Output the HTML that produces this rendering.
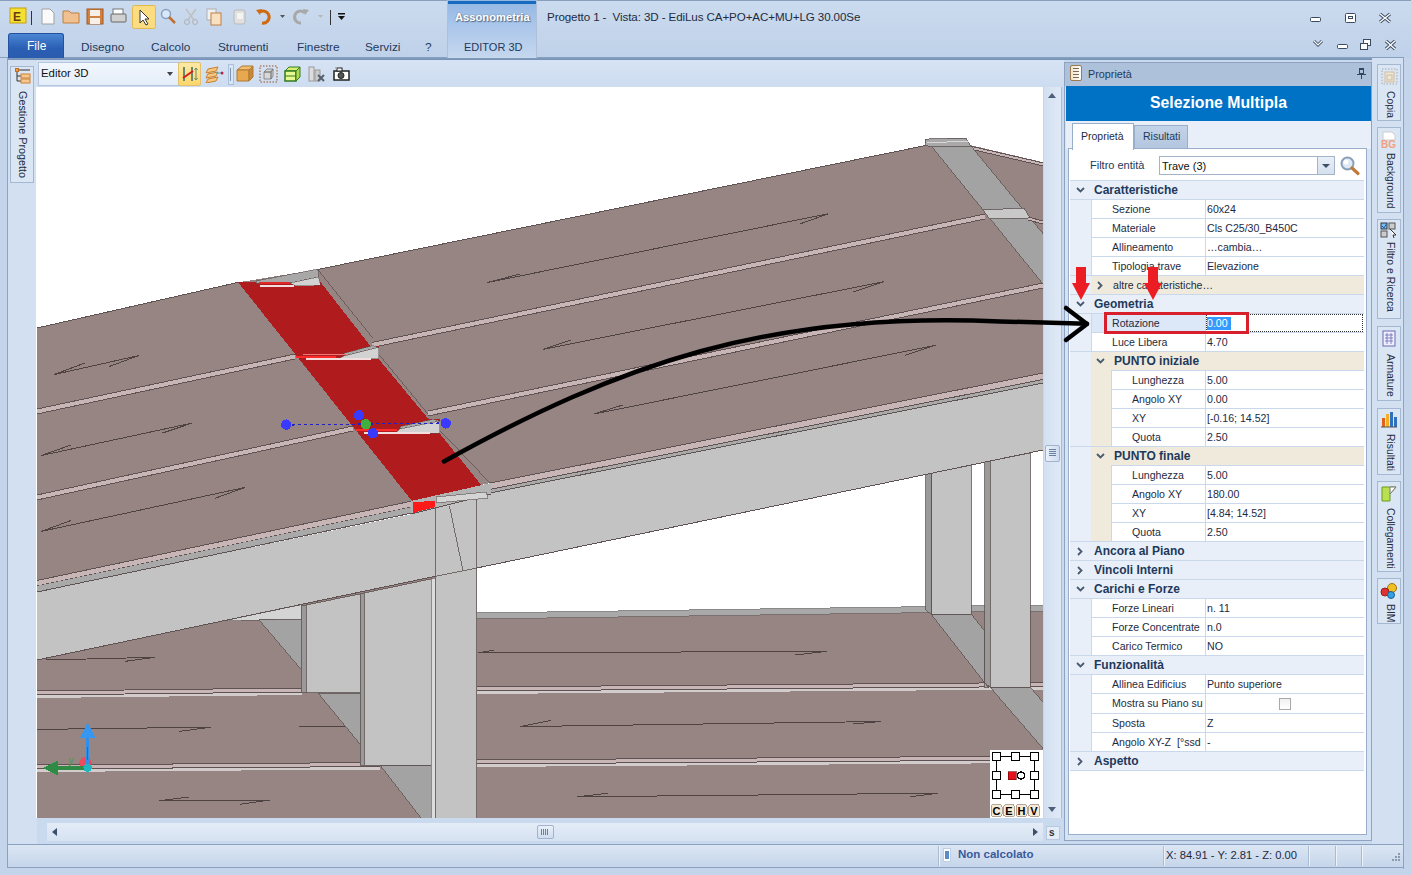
<!DOCTYPE html>
<html><head><meta charset="utf-8"><style>
*{margin:0;padding:0;box-sizing:border-box}
body{width:1411px;height:875px;overflow:hidden;position:relative;background:#c9d9ee;font-family:"Liberation Sans",sans-serif;font-size:11px;color:#1e2b3f}
.a{position:absolute}
.t{position:absolute;white-space:nowrap;line-height:1}
.vt{position:absolute;transform-origin:0 0;transform:rotate(90deg);white-space:nowrap;color:#1e2b3f;line-height:1}
#view{left:37px;top:87px;width:1006px;height:731px;background:#fff;overflow:hidden}
</style></head><body>
<div class="a" style="left:0;top:0;width:1411px;height:58px;background:linear-gradient(#cbdbef,#bfd1e9)"></div>
<div class="a" style="left:0;top:0;width:1411px;height:1px;background:#8a9fbb"></div>
<div class="a" style="left:0;top:57px;width:1404px;height:3px;background:linear-gradient(#8aa3c3,#7390b3)"></div>
<div class="a" style="left:447px;top:0;width:90px;height:58px;background:linear-gradient(#92b6e2,#a8c5ea 40%,#c6d7ee);border-left:1px solid #aec0d8;border-right:1px solid #aec0d8"></div>
<div class="a" style="left:448px;top:1px;width:88px;height:3px;background:#166ac0"></div>
<div class="t" style="left:455px;top:12px;font-size:11.2px;font-weight:bold;color:#fff;text-shadow:1px 1px 1px #5a6a80,0 0 2px #6a88b8">Assonometria</div>
<div class="t" style="left:464px;top:42px;font-size:11px;color:#1e395b">EDITOR 3D</div>
<div class="t" style="left:547px;top:11px;font-size:11.6px;color:#1e2b3f;letter-spacing:-0.1px">Progetto 1 -&nbsp; Vista: 3D - EdiLus CA+PO+AC+MU+LG 30.00Se</div>
<div class="a" style="left:8px;top:33px;width:56px;height:25px;background:linear-gradient(#4a86d4,#2b5fb4 60%,#2a5cae);border:1px solid #2450a0;border-bottom:none;border-radius:3px 3px 0 0"></div>
<div class="t" style="left:27px;top:40px;font-size:12px;color:#fff">File</div>
<div class="t" style="left:81px;top:42px;font-size:11.8px;color:#1e395b">Disegno</div>
<div class="t" style="left:151px;top:42px;font-size:11.8px;color:#1e395b">Calcolo</div>
<div class="t" style="left:218px;top:42px;font-size:11.8px;color:#1e395b">Strumenti</div>
<div class="t" style="left:297px;top:42px;font-size:11.8px;color:#1e395b">Finestre</div>
<div class="t" style="left:365px;top:42px;font-size:11.8px;color:#1e395b">Servizi</div>
<div class="t" style="left:425px;top:42px;font-size:11.8px;color:#1e395b">?</div>
<svg class="a" style="left:1300px;top:8px" width="100" height="48" viewBox="0 0 100 48"><rect x="10.5" y="9.5" width="10" height="4" rx="1" fill="#fff" stroke="#3a4a60" stroke-width="1"/><rect x="45.5" y="5.5" width="10" height="9" rx="1" fill="#fff" stroke="#3a4a60" stroke-width="1"/><rect x="48.5" y="8.5" width="4" height="2" fill="none" stroke="#3a4a60"/><path d="M80,6 L90,14 M90,6 L80,14" stroke="#3a4a60" stroke-width="3.2"/><path d="M80,6 L90,14 M90,6 L80,14" stroke="#fff" stroke-width="1.4"/><path d="M14,33 L18,37 L22,33" fill="none" stroke="#3a4a60" stroke-width="3"/><path d="M14,33 L18,37 L22,33" fill="none" stroke="#fff" stroke-width="1.2"/><rect x="37.5" y="36.5" width="10" height="4" rx="1" fill="#fff" stroke="#3a4a60"/><rect x="63.5" y="31.5" width="7" height="6" fill="#fff" stroke="#3a4a60"/><rect x="60.5" y="35.5" width="7" height="6" fill="#fff" stroke="#3a4a60"/><path d="M86,33 L95,41 M95,33 L86,41" stroke="#3a4a60" stroke-width="3.2"/><path d="M86,33 L95,41 M95,33 L86,41" stroke="#fff" stroke-width="1.4"/></svg>
<svg class="a" style="left:0;top:0" width="360" height="32" viewBox="0 0 360 32"><rect x="10" y="8" width="16" height="15" fill="#f5e030" stroke="#c8a010"/><text x="13" y="21" font-size="12" font-weight="bold" fill="#6a3a10" font-family="Liberation Sans">E</text><line x1="31.5" y1="11" x2="31.5" y2="25" stroke="#333"/><path d="M42,9 H50 L54,13 V24 H42Z" fill="#fafafa" stroke="#a0a0a0"/><path d="M63,11 H69 L71,13 H79 V23 H63Z" fill="#f0c090" stroke="#c08040"/><rect x="87" y="9" width="16" height="15" fill="#d08040" stroke="#a05820"/><rect x="90" y="10" width="10" height="6" fill="#f8f0e8"/><rect x="90" y="18" width="10" height="6" fill="#f8f0e8"/><rect x="113" y="9" width="10" height="6" fill="#fff" stroke="#777"/><rect x="111" y="14" width="15" height="8" rx="1" fill="#d0d0d0" stroke="#666"/><rect x="132.5" y="5.5" width="23" height="23" rx="2" fill="#fcdc80" stroke="#e0b850"/><path d="M140,10 L140,23 L143,20 L146,25 L148,24 L145,19 L149,19Z" fill="#fff" stroke="#333" stroke-width="1"/><circle cx="166" cy="14" r="4.5" fill="#d8e8f8" stroke="#8aa0c0" stroke-width="1.5"/><line x1="169" y1="17" x2="175" y2="23" stroke="#c07030" stroke-width="2.5"/><path d="M186,9 L194,20 M196,9 L188,20" stroke="#c0c0c0" stroke-width="1.5"/><circle cx="187" cy="22" r="2.5" fill="none" stroke="#b0b0b0"/><circle cx="195" cy="22" r="2.5" fill="none" stroke="#b0b0b0"/><rect x="207" y="9" width="9" height="11" fill="#f0f0f0" stroke="#b0b0b0"/><rect x="211" y="13" width="10" height="12" fill="#f8e0c0" stroke="#c08040"/><rect x="234" y="10" width="11" height="14" rx="2" fill="#e0e0e0" stroke="#b8b8b8"/><rect x="237" y="13" width="6" height="6" fill="#f4f4f4"/><path d="M260,12 A6,6 0 1 1 262,23" fill="none" stroke="#d06a10" stroke-width="3"/><path d="M256,10 L262,9 L260,15Z" fill="#d06a10"/><path d="M280,15 L285,15 L282.5,18Z" fill="#555"/><path d="M305,13 A6,6 0 1 0 301,23" fill="none" stroke="#a8a8a8" stroke-width="3"/><path d="M309,10 L303,9 L305,15Z" fill="#a8a8a8"/><path d="M318,15 L323,15 L320.5,18Z" fill="#b8b8b8"/><line x1="330.5" y1="10" x2="330.5" y2="25" stroke="#333"/><rect x="338" y="13" width="7" height="1.5" fill="#111"/><path d="M338,16 L345,16 L341.5,20Z" fill="#111"/></svg>
<div class="a" style="left:0;top:58px;width:7px;height:817px;background:#c4d4ea"></div>
<div class="a" style="left:7px;top:58px;width:1px;height:811px;background:#8ea3bf"></div>
<div class="a" style="left:8px;top:60px;width:29px;height:784px;background:#d3e0f1"></div>
<div class="a" style="left:10px;top:66px;width:24px;height:117px;background:#dbe6f4;border:1px solid #a4b8d2"></div>
<svg class="a" style="left:14px;top:67px" width="17" height="17" viewBox="0 0 17 17"><rect x="1.5" y="1.5" width="3" height="3" fill="#f0a040" stroke="#c07020" stroke-width="1"/><path d="M3,5 V14 H7 M3,9 H7 M5,3 H16" fill="none" stroke="#333" stroke-width="1"/><rect x="7" y="7" width="9" height="4" fill="#f6c890" stroke="#d08030" stroke-width="1"/><rect x="7" y="12" width="9" height="4" fill="#f6c890" stroke="#d08030" stroke-width="1"/></svg>
<div class="vt" style="left:28px;top:91px;font-size:10.8px">Gestione Progetto</div>
<div class="a" style="left:37px;top:60px;width:1027px;height:27px;background:linear-gradient(#d6e3f4,#cddcf0)"></div>
<div class="a" style="left:38px;top:62px;width:141px;height:24px;background:linear-gradient(#f2f7fd,#e4edf8);border:1px solid #b3c6de"></div>
<div class="t" style="left:41px;top:68px;font-size:11.4px;color:#111">Editor 3D</div>
<div class="a" style="left:167px;top:72px;width:0;height:0;border-left:3.5px solid transparent;border-right:3.5px solid transparent;border-top:4px solid #444"></div>
<div class="a" style="left:178px;top:62px;width:23px;height:24px;background:linear-gradient(#fde9a5,#fcd66c);border:1px solid #e3c06a;border-radius:2px"></div>
<svg class="a" style="left:181px;top:66px" width="18" height="16" viewBox="0 0 18 16"><rect x="2" y="1" width="2" height="14" fill="#6a8a70"/><rect x="10" y="1" width="2" height="14" fill="#6a8a70"/><line x1="2" y1="12" x2="12" y2="5" stroke="#d02020" stroke-width="2"/><path d="M15,2 V14 M13.5,4 L15,2 L16.5,4 M13.5,12 L15,14 L16.5,12" stroke="#6a8a70" fill="none" stroke-width="1"/></svg>
<svg class="a" style="left:205px;top:65px" width="20" height="18" viewBox="0 0 20 18"><path d="M3,4 L13,2 L11,6 L1,8Z M3,9 L13,7 L11,11 L1,13Z M3,14 L13,12 L11,16 L1,18Z" fill="#f8c880" stroke="#c8802a" stroke-width="1"/><circle cx="17" cy="8" r="1.5" fill="#c02040"/><line x1="11" y1="8" x2="16" y2="8" stroke="#50a0b0"/></svg>
<div class="a" style="left:228px;top:64px;width:6px;height:21px;border:1px solid #aac0da;background:#d8e5f5"></div><div class="a" style="left:230px;top:68px;width:1px;height:13px;background:#7f95b5"></div>
<svg class="a" style="left:236px;top:65px" width="18" height="17" viewBox="0 0 18 17"><path d="M1,5 L6,1 H17 L13,5Z" fill="#f0c070" stroke="#b07a30"/><path d="M1,5 H13 V16 H1Z" fill="#e8a850" stroke="#b07a30"/><path d="M13,5 L17,1 V12 L13,16Z" fill="#c88838" stroke="#b07a30"/></svg>
<svg class="a" style="left:259px;top:65px" width="19" height="18" viewBox="0 0 19 18"><rect x="1" y="1" width="17" height="16" fill="none" stroke="#a05020" stroke-dasharray="1.5,1.5"/><path d="M5,7 L8,4 H14 L12,7Z M5,7 H12 V14 H5Z M12,7 L14,4 V11 L12,14Z" fill="#d8d8d8" stroke="#777" stroke-width="0.8"/></svg>
<svg class="a" style="left:283px;top:64px" width="19" height="19" viewBox="0 0 19 19"><path d="M2,7 L6,3 H17 L13,7Z" fill="#d8f070" stroke="#307a20"/><path d="M2,7 H13 V17 H2Z" fill="#e8f890" stroke="#307a20" stroke-width="1.5"/><path d="M13,7 L17,3 V13 L13,17Z" fill="#b0d850" stroke="#307a20"/><line x1="2" y1="12" x2="13" y2="12" stroke="#307a20"/></svg>
<svg class="a" style="left:307px;top:64px" width="19" height="19" viewBox="0 0 19 19"><rect x="2" y="3" width="5" height="14" fill="#ddd" stroke="#999"/><rect x="8" y="6" width="5" height="11" fill="#ccc" stroke="#999"/><path d="M11,11 L17,17 M17,11 L11,17" stroke="#556070" stroke-width="2"/></svg>
<svg class="a" style="left:332px;top:65px" width="19" height="17" viewBox="0 0 19 17"><rect x="2" y="6" width="15" height="9" fill="#fff" stroke="#222" stroke-width="1.5"/><circle cx="9" cy="10.5" r="3" fill="#555" stroke="#222"/><rect x="5" y="3" width="5" height="3" fill="#fff" stroke="#222"/><circle cx="4" cy="3" r="1" fill="#aaa"/></svg>
<div class="a" style="left:36px;top:87px;width:1px;height:731px;background:#fff"></div>
<div class="a" style="left:1043px;top:87px;width:19px;height:731px;background:linear-gradient(90deg,#d3e0f1,#e0e9f6);border-left:1px solid #c8d6ea;border-right:1px solid #a9bcd6"></div>
<div class="a" style="left:1048px;top:93px;width:0;height:0;border-left:4.5px solid transparent;border-right:4.5px solid transparent;border-bottom:5px solid #4e5f7a"></div>
<div class="a" style="left:1048px;top:807px;width:0;height:0;border-left:4.5px solid transparent;border-right:4.5px solid transparent;border-top:5px solid #4e5f7a"></div>
<div class="a" style="left:1045px;top:445px;width:15px;height:17px;background:linear-gradient(90deg,#e9f0fa,#cfdcef);border:1px solid #9fb3cf;border-radius:2px"></div>
<div class="a" style="left:1049px;top:449px;width:7px;height:1px;background:#6a7f9f"></div>
<div class="a" style="left:1049px;top:451px;width:7px;height:1px;background:#6a7f9f"></div>
<div class="a" style="left:1049px;top:453px;width:7px;height:1px;background:#6a7f9f"></div>
<div class="a" style="left:1049px;top:455px;width:7px;height:1px;background:#6a7f9f"></div>
<div class="a" style="left:37px;top:818px;width:1026px;height:26px;background:#c9d9ee"></div>
<div class="a" style="left:47px;top:823px;width:996px;height:18px;background:linear-gradient(#e3ecf7,#d6e2f2)"></div>
<div class="a" style="left:52px;top:828px;width:0;height:0;border-top:4.5px solid transparent;border-bottom:4.5px solid transparent;border-right:5px solid #3e4f6a"></div>
<div class="a" style="left:1033px;top:828px;width:0;height:0;border-top:4.5px solid transparent;border-bottom:4.5px solid transparent;border-left:5px solid #3e4f6a"></div>
<div class="a" style="left:537px;top:825px;width:17px;height:14px;background:linear-gradient(#e9f0fa,#cfdcef);border:1px solid #9fb3cf;border-radius:2px"></div>
<div class="a" style="left:541px;top:829px;width:1px;height:6px;background:#6a7f9f"></div>
<div class="a" style="left:543px;top:829px;width:1px;height:6px;background:#6a7f9f"></div>
<div class="a" style="left:545px;top:829px;width:1px;height:6px;background:#6a7f9f"></div>
<div class="a" style="left:547px;top:829px;width:1px;height:6px;background:#6a7f9f"></div>
<div class="a" style="left:1046px;top:826px;width:14px;height:14px;background:#e4ecf7;border:1px solid #b8c8de"></div>
<div class="t" style="left:1049px;top:828px;font-size:10px;color:#333;font-weight:bold">s</div>
<div class="a" style="left:7px;top:844px;width:1397px;height:24px;background:linear-gradient(#dbe6f4,#c6d5ea);border-top:1px solid #8aa1c0;border-bottom:1px solid #8aa1c0;border-left:1px solid #8aa1c0"></div>
<div class="a" style="left:938px;top:846px;width:1px;height:20px;background:#a9bbd3"></div><div class="a" style="left:939px;top:846px;width:1px;height:20px;background:#eef3fa"></div>
<div class="a" style="left:1163px;top:846px;width:1px;height:20px;background:#a9bbd3"></div><div class="a" style="left:1164px;top:846px;width:1px;height:20px;background:#eef3fa"></div>
<div class="a" style="left:1308px;top:846px;width:1px;height:20px;background:#a9bbd3"></div><div class="a" style="left:1309px;top:846px;width:1px;height:20px;background:#eef3fa"></div>
<div class="a" style="left:1335px;top:846px;width:1px;height:20px;background:#a9bbd3"></div><div class="a" style="left:1336px;top:846px;width:1px;height:20px;background:#eef3fa"></div>
<div class="a" style="left:1361px;top:846px;width:1px;height:20px;background:#a9bbd3"></div><div class="a" style="left:1362px;top:846px;width:1px;height:20px;background:#eef3fa"></div>
<div class="a" style="left:943px;top:848px;width:8px;height:14px;background:#fff;border:1px solid #c0d0e4"></div><div class="a" style="left:945px;top:851px;width:4px;height:8px;background:#5a8ac8"></div>
<div class="t" style="left:958px;top:849px;font-size:11.5px;font-weight:bold;color:#3a5a9a">Non calcolato</div>
<div class="t" style="left:1166px;top:850px;font-size:11.2px;color:#1e2b3f">X: 84.91 - Y: 2.81 - Z: 0.00</div>
<div class="a" style="left:1398px;top:853px;width:2px;height:2px;background:#8a9ab0"></div>
<div class="a" style="left:1395px;top:856px;width:2px;height:2px;background:#8a9ab0"></div>
<div class="a" style="left:1398px;top:856px;width:2px;height:2px;background:#8a9ab0"></div>
<div class="a" style="left:1392px;top:859px;width:2px;height:2px;background:#8a9ab0"></div>
<div class="a" style="left:1395px;top:859px;width:2px;height:2px;background:#8a9ab0"></div>
<div class="a" style="left:1398px;top:859px;width:2px;height:2px;background:#8a9ab0"></div>
<div class="a" style="left:0;top:868px;width:1411px;height:7px;background:#c4d4ea"></div>
<div class="a" style="left:1372px;top:58px;width:31px;height:786px;background:#d3e0f1"></div>
<div class="a" style="left:1403px;top:58px;width:1px;height:811px;background:#8ea3bf"></div>
<div class="a" style="left:1404px;top:58px;width:7px;height:817px;background:#c4d4ea"></div>
<div class="a" style="left:1377px;top:64px;width:24px;height:57px;background:#dbe6f4;border:1px solid #a4b8d2"></div>
<div class="vt" style="left:1395px;top:91px;font-size:10.4px">Copia</div>
<div class="a" style="left:1377px;top:127px;width:24px;height:86px;background:#dbe6f4;border:1px solid #a4b8d2"></div>
<div class="vt" style="left:1395px;top:153px;font-size:10.4px">Background</div>
<div class="a" style="left:1377px;top:219px;width:24px;height:100px;background:#dbe6f4;border:1px solid #a4b8d2"></div>
<div class="vt" style="left:1395px;top:242px;font-size:10.4px">Filtro e Ricerca</div>
<div class="a" style="left:1377px;top:326px;width:24px;height:75px;background:#dbe6f4;border:1px solid #a4b8d2"></div>
<div class="vt" style="left:1395px;top:354px;font-size:10.4px">Armature</div>
<div class="a" style="left:1377px;top:408px;width:24px;height:67px;background:#dbe6f4;border:1px solid #a4b8d2"></div>
<div class="vt" style="left:1395px;top:434px;font-size:10.4px">Risultati</div>
<div class="a" style="left:1377px;top:481px;width:24px;height:91px;background:#dbe6f4;border:1px solid #a4b8d2"></div>
<div class="vt" style="left:1395px;top:508px;font-size:10.4px">Collegamenti</div>
<div class="a" style="left:1377px;top:578px;width:24px;height:46px;background:#dbe6f4;border:1px solid #a4b8d2"></div>
<div class="vt" style="left:1395px;top:604px;font-size:10.4px">BIM</div>
<svg class="a" style="left:1381px;top:68px" width="17" height="17" viewBox="0 0 17 17"><rect x="1" y="1" width="15" height="15" fill="none" stroke="#aaa" stroke-dasharray="1.5,1.5"/><rect x="4" y="4" width="9" height="10" fill="#efe6d6" stroke="#cdbda0"/><rect x="6" y="7" width="5" height="5" fill="none" stroke="#cdbda0"/></svg>
<svg class="a" style="left:1380px;top:131px" width="19" height="18" viewBox="0 0 19 18"><path d="M3,1 H12 L15,4 V9 H3Z" fill="#fff" stroke="#ccc"/><text x="1" y="17" font-size="10" font-weight="bold" fill="#f0a080" font-family="Liberation Sans">BG</text></svg>
<svg class="a" style="left:1380px;top:222px" width="18" height="17" viewBox="0 0 18 17"><rect x="1" y="1" width="6" height="6" fill="#7ac0f0" stroke="#333"/><path d="M2,4 L4,6 L7,1" stroke="#1a5ab0" fill="none"/><rect x="1" y="9" width="6" height="6" fill="#ccc" stroke="#555"/><rect x="9" y="1" width="6" height="6" fill="#ccc" stroke="#555"/><path d="M10,7 L16,13 L13,13 L14,16" fill="#fff" stroke="#333"/></svg>
<svg class="a" style="left:1381px;top:330px" width="16" height="17" viewBox="0 0 16 17"><rect x="2" y="1" width="12" height="15" fill="#eef" stroke="#6a6ab0"/><path d="M4,5 H12 M4,8 H12 M4,11 H12 M6,3 V14 M10,3 V14" stroke="#6a6ab0" stroke-width="0.8"/></svg>
<svg class="a" style="left:1380px;top:410px" width="18" height="18" viewBox="0 0 18 18"><rect x="2" y="8" width="3" height="9" fill="#e06020"/><rect x="6" y="4" width="3" height="13" fill="#f0b020"/><rect x="10" y="2" width="3" height="15" fill="#3070c0"/><rect x="14" y="7" width="3" height="10" fill="#3070c0"/><line x1="1" y1="17" x2="17" y2="17" stroke="#555"/></svg>
<svg class="a" style="left:1380px;top:485px" width="18" height="18" viewBox="0 0 18 18"><path d="M2,2 H16 L10,9 V16 H2Z" fill="#b8e050" stroke="#6a9a20"/><path d="M10,2 H16 L10,9Z" fill="#fff" stroke="#777"/></svg>
<svg class="a" style="left:1380px;top:582px" width="18" height="17" viewBox="0 0 18 17"><circle cx="12" cy="6" r="4.5" fill="#f0c020" stroke="#a07010"/><circle cx="5" cy="10" r="4" fill="#e03030" stroke="#902020"/><circle cx="11" cy="13" r="3.5" fill="#30a0e0" stroke="#206090"/></svg>
<div id="view" class="a"><svg class="a" style="left:0;top:0" width="1006" height="731" viewBox="37 87 1006 731" shape-rendering="crispEdges"><polygon points="37,600 1043,440 1043,818 37,818" fill="#978584"/><polygon points="476.5,566 1043,448 1043,608 476.5,617.5" fill="#ffffff"/><polygon points="476.5,613 1043,605 1043,611 476.5,619" fill="#a9a9a9"/><line x1="476.5" y1="619" x2="1043" y2="611" stroke="#7a7070" stroke-width="1"/><line x1="476.5" y1="613" x2="1043" y2="605" stroke="#8a8a8a" stroke-width="1"/><polygon points="37,691 302,688 302,692 37,695" fill="#c8b6b6"/><polygon points="37,695 302,692 302,695 37,698" fill="#d2cccc"/><line x1="37" y1="691" x2="302" y2="688" stroke="#5e5252" stroke-width="1"/><line x1="37" y1="695" x2="302" y2="692" stroke="#5e5252" stroke-width="1"/><polygon points="476,687 1043,682.5 1043,686.5 476,691" fill="#c8b6b6"/><polygon points="476,691 1043,686.5 1043,689.5 476,694" fill="#d2cccc"/><line x1="476" y1="687" x2="1043" y2="682.5" stroke="#5e5252" stroke-width="1"/><line x1="476" y1="691" x2="1043" y2="686.5" stroke="#5e5252" stroke-width="1"/><polygon points="37,765 380,762.5 380,766.5 37,769" fill="#c8b6b6"/><polygon points="37,769 380,766.5 380,769.5 37,772" fill="#d2cccc"/><line x1="37" y1="765" x2="380" y2="762.5" stroke="#5e5252" stroke-width="1"/><line x1="37" y1="769" x2="380" y2="766.5" stroke="#5e5252" stroke-width="1"/><polygon points="476,760 1043,756 1043,760 476,764" fill="#c8b6b6"/><polygon points="476,764 1043,760 1043,763 476,767" fill="#d2cccc"/><line x1="476" y1="760" x2="1043" y2="756" stroke="#5e5252" stroke-width="1"/><line x1="476" y1="764" x2="1043" y2="760" stroke="#5e5252" stroke-width="1"/><line x1="46.5" y1="660" x2="154.8" y2="657.3" stroke="#4e4242" stroke-width="1"/><line x1="154.8" y1="657.3" x2="124.6" y2="661.4" stroke="#4e4242" stroke-width="1"/><line x1="37" y1="729.4" x2="211" y2="727.2" stroke="#4e4242" stroke-width="1"/><line x1="211" y1="727.2" x2="179.4" y2="731.4" stroke="#4e4242" stroke-width="1"/><line x1="158.9" y1="800.7" x2="270" y2="800" stroke="#4e4242" stroke-width="1"/><line x1="158.9" y1="800.7" x2="189" y2="797" stroke="#4e4242" stroke-width="1"/><line x1="270" y1="800" x2="239.8" y2="804.3" stroke="#4e4242" stroke-width="1"/><line x1="478" y1="653" x2="826.7" y2="651.3" stroke="#4e4242" stroke-width="1"/><line x1="478" y1="653" x2="494" y2="650" stroke="#4e4242" stroke-width="1"/><line x1="826.7" y1="651.3" x2="795.5" y2="655" stroke="#4e4242" stroke-width="1"/><line x1="520" y1="726.6" x2="881.2" y2="721.5" stroke="#4e4242" stroke-width="1"/><line x1="520" y1="726.6" x2="551" y2="720.4" stroke="#4e4242" stroke-width="1"/><line x1="881.2" y1="721.5" x2="852.6" y2="724" stroke="#4e4242" stroke-width="1"/><line x1="577.2" y1="796.8" x2="938.4" y2="793.2" stroke="#4e4242" stroke-width="1"/><line x1="577.2" y1="796.8" x2="608.4" y2="793.2" stroke="#4e4242" stroke-width="1"/><line x1="938.4" y1="793.2" x2="909.8" y2="796.8" stroke="#4e4242" stroke-width="1"/><line x1="299" y1="727" x2="346" y2="726" stroke="#4e4242" stroke-width="1"/><polygon points="223,621 302,604.5 302,619.5 259,620" fill="#d4d4d4" stroke="#5e5252" stroke-width="0.6"/><polygon points="259,619.8 302,619 302,670.5" fill="#a3a3a3" stroke="#5e5252" stroke-width="0.8"/><polygon points="318,693 360,693 360,744" fill="#a3a3a3" stroke="#5e5252" stroke-width="0.8"/><polygon points="380,765 435,765 435,818 421,818" fill="#a3a3a3" stroke="#5e5252" stroke-width="0.8"/><polygon points="931,614 971,614 984,630 984,687 988.6,687.7" fill="#a3a3a3" stroke="#5e5252" stroke-width="0.8"/><polygon points="990,687 1030,687 1043,702 1043,748.5" fill="#a3a3a3" stroke="#5e5252" stroke-width="0.8"/><polygon points="925.6,474 931.5,473 931.5,614.3 925.6,610" fill="#9a9a9a" stroke="#5e5252" stroke-width="0.8"/><polygon points="931.5,473 971.2,465 971.2,614.3 931.5,614.3" fill="#c3c3c3" stroke="#5e5252" stroke-width="0.8"/><polygon points="984.6,462 990.3,461 990.3,687 984.6,683" fill="#9a9a9a" stroke="#5e5252" stroke-width="0.8"/><polygon points="990.3,461 1030.2,453 1030.2,687 990.3,687" fill="#c3c3c3" stroke="#5e5252" stroke-width="0.8"/><polygon points="301,606 306,605 306,692.8 301,692.8" fill="#9a9a9a" stroke="#5e5252" stroke-width="0.8"/><polygon points="306,605 360,594 360,692.8 306,692.8" fill="#c3c3c3" stroke="#5e5252" stroke-width="0.8"/><polygon points="360,594 364,593 364,765.4 360,765.4" fill="#9a9a9a" stroke="#5e5252" stroke-width="0.8"/><polygon points="364,593 431,579 431,765.4 364,765.4" fill="#c3c3c3" stroke="#5e5252" stroke-width="0.8"/><polygon points="431,579 435,578 435,818 431,818" fill="#dcdcdc" stroke="#5e5252" stroke-width="0.6"/><polygon points="37,592 412,514 490,493 1043,383 1043,450 476.8,568 435,576.3 37,660" fill="#c3c3c3"/><line x1="37" y1="660" x2="435" y2="576.3" stroke="#5e5252" stroke-width="1"/><line x1="476.8" y1="568" x2="1043" y2="450" stroke="#5e5252" stroke-width="1"/><polygon points="435.1,503 476.5,498 476.5,818 435.1,818" fill="#c3c3c3" stroke="#5e5252" stroke-width="0.8"/><line x1="449.4" y1="505.8" x2="463" y2="570.8" stroke="#5e5252" stroke-width="0.8"/><line x1="435.1" y1="576.3" x2="476.5" y2="568" stroke="#5e5252" stroke-width="0.8"/><polygon points="37,328 238,282.4 318,269.4 925.7,145 970,145 1043.5,162.3 1043,373 490,483 412,501 37,580.5" fill="#978584"/><line x1="37" y1="328" x2="238" y2="282.4" stroke="#5e5252" stroke-width="1"/><line x1="318" y1="269.4" x2="925.7" y2="145.5" stroke="#5e5252" stroke-width="1"/><polygon points="970,146 1043.5,163 1043.5,166 970,149" fill="#c8b6b6"/><line x1="970" y1="146" x2="1043.5" y2="163" stroke="#5e5252" stroke-width="1"/><line x1="970" y1="149" x2="1043.5" y2="166" stroke="#5e5252" stroke-width="1"/><polygon points="931.5,146.3 970.3,145.2 1043.5,234.3 1043.5,284.6" fill="#a3a3a3" stroke="#5e5252" stroke-width="0.8"/><polygon points="925.1,139.1 965.7,138 970.9,146 932,147 925.7,145.4" fill="#a9a9a9" stroke="#5e5252" stroke-width="0.8"/><line x1="927" y1="142.5" x2="968" y2="141.5" stroke="#d8d8d8" stroke-width="1"/><polygon points="983,210 1024,208 1030,218 989.8,219" fill="#c8c8c8" stroke="#5e5252" stroke-width="0.8"/><polygon points="37,409 295,354 295,359 37,414" fill="#c8b6b6"/><line x1="37" y1="409" x2="295" y2="354" stroke="#5e5252" stroke-width="1"/><line x1="37" y1="414" x2="295" y2="359" stroke="#5e5252" stroke-width="1"/><polygon points="37,495 353,426 353,431 37,500" fill="#c8b6b6"/><line x1="37" y1="495" x2="353" y2="426" stroke="#5e5252" stroke-width="1"/><line x1="37" y1="500" x2="353" y2="431" stroke="#5e5252" stroke-width="1"/><polygon points="372,342.5 985,214 985,219 372,347.5" fill="#c8b6b6"/><line x1="372" y1="342.5" x2="985" y2="214" stroke="#5e5252" stroke-width="1"/><line x1="372" y1="347.5" x2="985" y2="219" stroke="#5e5252" stroke-width="1"/><polygon points="428,411 1043,283 1043,288 428,416" fill="#c8b6b6"/><line x1="428" y1="411" x2="1043" y2="283" stroke="#5e5252" stroke-width="1"/><line x1="428" y1="416" x2="1043" y2="288" stroke="#5e5252" stroke-width="1"/><polygon points="1028,217 1043,221 1043,224 1028,220" fill="#c8b6b6"/><line x1="1028" y1="217" x2="1043" y2="221" stroke="#5e5252" stroke-width="1"/><line x1="1028" y1="220" x2="1043" y2="224" stroke="#5e5252" stroke-width="1"/><polygon points="37,580.5 412,501 412,512 37,592" fill="#c8b6b6"/><line x1="37" y1="580.5" x2="412" y2="501" stroke="#5e5252" stroke-width="1"/><line x1="37" y1="586" x2="412" y2="507" stroke="#5e5252" stroke-width="1"/><line x1="37" y1="592" x2="412" y2="513" stroke="#5e5252" stroke-width="1"/><polygon points="37,586 412,507 412,513 37,592" fill="#a9a9a9"/><line x1="37" y1="592" x2="412" y2="513" stroke="#5e5252" stroke-width="1"/><polygon points="490,483 1043,373 1043,383 490,493" fill="#c8b6b6"/><polygon points="490,489.4 1043,379.4 1043,383 490,493" fill="#a9a9a9"/><line x1="490" y1="483" x2="1043" y2="373" stroke="#5e5252" stroke-width="1"/><line x1="490" y1="489.4" x2="1043" y2="379.4" stroke="#5e5252" stroke-width="1"/><line x1="490" y1="493" x2="1043" y2="383" stroke="#5e5252" stroke-width="1"/><line x1="54" y1="374.6" x2="138.6" y2="355.6" stroke="#4e4242" stroke-width="1"/><line x1="54" y1="374.6" x2="84.9" y2="363" stroke="#4e4242" stroke-width="1"/><line x1="138.6" y1="355.6" x2="108.9" y2="366.6" stroke="#4e4242" stroke-width="1"/><line x1="41.4" y1="455.5" x2="192.4" y2="423" stroke="#4e4242" stroke-width="1"/><line x1="41.4" y1="455.5" x2="71" y2="445" stroke="#4e4242" stroke-width="1"/><line x1="192.4" y1="423" x2="162.6" y2="433" stroke="#4e4242" stroke-width="1"/><line x1="41.4" y1="531.4" x2="244.8" y2="487.5" stroke="#4e4242" stroke-width="1"/><line x1="41.4" y1="531.4" x2="71.1" y2="520.4" stroke="#4e4242" stroke-width="1"/><line x1="244.8" y1="487.5" x2="215" y2="498.3" stroke="#4e4242" stroke-width="1"/><line x1="487.5" y1="282.5" x2="828.5" y2="213.7" stroke="#4e4242" stroke-width="1"/><line x1="487.5" y1="282.5" x2="520" y2="274" stroke="#4e4242" stroke-width="1"/><line x1="828.5" y1="213.7" x2="799.7" y2="224" stroke="#4e4242" stroke-width="1"/><line x1="542.6" y1="349.4" x2="884" y2="281.6" stroke="#4e4242" stroke-width="1"/><line x1="542.6" y1="349.4" x2="571" y2="340" stroke="#4e4242" stroke-width="1"/><line x1="884" y1="281.6" x2="853" y2="292" stroke="#4e4242" stroke-width="1"/><line x1="594" y1="414" x2="935.5" y2="345.3" stroke="#4e4242" stroke-width="1"/><line x1="594" y1="414" x2="622.8" y2="405" stroke="#4e4242" stroke-width="1"/><line x1="935.5" y1="345.3" x2="904.6" y2="355.6" stroke="#4e4242" stroke-width="1"/><line x1="318" y1="270" x2="372.7" y2="338" stroke="#5e5252" stroke-width="0.8"/><line x1="372" y1="346" x2="428" y2="414" stroke="#5e5252" stroke-width="0.8"/><line x1="428" y1="418" x2="490" y2="483" stroke="#5e5252" stroke-width="0.8"/><polygon points="238,282.2 320.6,282.2 370.1,345.6 378.5,345.6 378.5,358.8 428.1,418.5 439.5,418.5 439.5,433.2 486.8,491.9 412,501" fill="#b01b1d"/><polygon points="256,281 317.8,269.1 318.5,277 290,283 256,283" fill="#a8a8a8" stroke="#5e5252" stroke-width="0.6"/><polygon points="290,283 318.5,277 320.6,285.4 296,285.8" fill="#d2d2d2" stroke="#5e5252" stroke-width="0.5"/><rect x="260" y="285" width="34" height="1.5" fill="#f2dede"/><rect x="259" y="282.3" width="31" height="1.2" fill="#e02828"/><polygon points="344,353.4 373,345.6 378.5,347.5 344,356" fill="#a8a8a8" stroke="#5e5252" stroke-width="0.5"/><polygon points="344,356 378.5,347.5 378.5,358.8 338,358.8" fill="#d2d2d2" stroke="#5e5252" stroke-width="0.5"/><rect x="306" y="358" width="65" height="1.5" fill="#f2dede"/><rect x="303" y="354" width="44" height="1" fill="#f07a7a"/><rect x="296" y="356" width="40" height="1.5" fill="#ff2a2a"/><polygon points="400,426.7 433,419.3 439.5,421 400,429" fill="#a8a8a8" stroke="#5e5252" stroke-width="0.5"/><polygon points="400,429 439.5,421 439.5,433.2 395,433.2" fill="#d2d2d2" stroke="#5e5252" stroke-width="0.5"/><rect x="364" y="432" width="66" height="1.5" fill="#f2dede"/><rect x="355" y="429" width="42" height="1.5" fill="#ff2a2a"/><polygon points="411,501 491,483 491,494 411,514" fill="#b4b4b4"/><line x1="411" y1="514" x2="491" y2="494" stroke="#5e5252" stroke-width="1"/><polygon points="436,497 486,492 488,498 436,503" fill="#d4d4d4" stroke="#5e5252" stroke-width="0.6"/><polygon points="412.6,502.5 434.6,500.5 434.6,507.4 412.6,513" fill="#ff1a1a"/><line x1="286" y1="425" x2="446" y2="423" stroke="#2020c8" stroke-width="1.2" stroke-dasharray="3,3"/><circle cx="286.3" cy="424.6" r="5.2" fill="#3a3aff"/><circle cx="358.8" cy="415.3" r="5.2" fill="#3a3aff"/><circle cx="445.7" cy="423.4" r="5.2" fill="#3a3aff"/><circle cx="372.7" cy="433.2" r="5.2" fill="#3a3aff"/><circle cx="365.8" cy="424.2" r="5.2" fill="#3fb03f"/><rect x="990" y="750" width="53" height="68" fill="#fff"/><rect x="996.5" y="756.5" width="38" height="38" fill="none" stroke="#000" stroke-width="1.3"/><rect x="992.5" y="752.5" width="8" height="8" fill="#fff" stroke="#000" stroke-width="1.3"/><rect x="992.5" y="771.5" width="8" height="8" fill="#fff" stroke="#000" stroke-width="1.3"/><rect x="992.5" y="790.5" width="8" height="8" fill="#fff" stroke="#000" stroke-width="1.3"/><rect x="1011.5" y="752.5" width="8" height="8" fill="#fff" stroke="#000" stroke-width="1.3"/><rect x="1011.5" y="790.5" width="8" height="8" fill="#fff" stroke="#000" stroke-width="1.3"/><rect x="1030.5" y="752.5" width="8" height="8" fill="#fff" stroke="#000" stroke-width="1.3"/><rect x="1030.5" y="771.5" width="8" height="8" fill="#fff" stroke="#000" stroke-width="1.3"/><rect x="1030.5" y="790.5" width="8" height="8" fill="#fff" stroke="#000" stroke-width="1.3"/><rect x="1008" y="771.5" width="8" height="8" fill="#e8101a" stroke="#600" stroke-width="0.6"/><circle cx="1021" cy="775.5" r="3.6" fill="#fff" stroke="#000" stroke-width="1.2"/><rect x="991.0" y="804.5" width="11" height="12" rx="2.5" fill="#f6ead8" stroke="#a09080" stroke-width="0.8"/><text x="996.5" y="814.5" font-size="11" font-weight="bold" text-anchor="middle" fill="#000" font-family="Liberation Sans">C</text><rect x="1003.5" y="804.5" width="11" height="12" rx="2.5" fill="#f6ead8" stroke="#a09080" stroke-width="0.8"/><text x="1009.0" y="814.5" font-size="11" font-weight="bold" text-anchor="middle" fill="#000" font-family="Liberation Sans">E</text><rect x="1016.0" y="804.5" width="11" height="12" rx="2.5" fill="#f6ead8" stroke="#a09080" stroke-width="0.8"/><text x="1021.5" y="814.5" font-size="11" font-weight="bold" text-anchor="middle" fill="#000" font-family="Liberation Sans">H</text><rect x="1028.5" y="804.5" width="11" height="12" rx="2.5" fill="#f6ead8" stroke="#a09080" stroke-width="0.8"/><text x="1034.0" y="814.5" font-size="11" font-weight="bold" text-anchor="middle" fill="#000" font-family="Liberation Sans">V</text><circle cx="85.5" cy="763" r="6.2" fill="#ec4a5e"/><line x1="87.6" y1="767.8" x2="87.6" y2="737" stroke="#2f90ec" stroke-width="3.2"/><line x1="87.6" y1="760" x2="87.6" y2="747" stroke="#2a6ab8" stroke-width="1.2"/><polygon points="80,738 95.3,738 87.6,722.6" fill="#3597f0"/><line x1="87.6" y1="768" x2="56" y2="768" stroke="#2f8a45" stroke-width="3.6"/><polygon points="57.8,760.5 57.8,775.2 42.5,768" fill="#2f8a45"/><circle cx="87.6" cy="767.8" r="4.2" fill="#1fb6bf"/><text x="68.5" y="764" font-size="10" fill="#4a9a4a" font-family="Liberation Sans">y</text></svg></div>
<div class="a" style="left:1064px;top:62px;width:308px;height:779px;background:#d6e3f3;border:1px solid #8fa3c0"></div>
<div class="a" style="left:1065px;top:63px;width:306px;height:23px;background:#aec1da"></div>
<div class="a" style="left:1070px;top:65px;width:12px;height:16px;border:1px solid #9a7a50;border-radius:2px;background:linear-gradient(90deg,#f3e3c8,#fff)"></div>
<div class="a" style="left:1073px;top:68px;width:6px;height:1px;background:#7a6a5a"></div>
<div class="a" style="left:1073px;top:71px;width:6px;height:1px;background:#7a6a5a"></div>
<div class="a" style="left:1073px;top:74px;width:6px;height:1px;background:#7a6a5a"></div>
<div class="a" style="left:1073px;top:77px;width:6px;height:1px;background:#7a6a5a"></div>
<div class="t" style="left:1088px;top:69px;font-size:10.8px;color:#1e395b">Proprietà</div>
<div class="a" style="left:1359px;top:68px;width:5px;height:6px;border:1px solid #33475f;border-top-width:2px"></div>
<div class="a" style="left:1357px;top:74px;width:9px;height:1px;background:#33475f"></div>
<div class="a" style="left:1361px;top:75px;width:1px;height:4px;background:#33475f"></div>
<div class="a" style="left:1066px;top:86px;width:305px;height:35px;background:#0072c6"></div>
<div class="t" style="left:1066px;width:305px;text-align:center;top:95px;font-size:15.8px;font-weight:bold;color:#fff">Selezione Multipla</div>
<div class="a" style="left:1066px;top:121px;width:305px;height:28px;background:#e8eff9"></div>
<div class="a" style="left:1134px;top:125px;width:54px;height:24px;background:linear-gradient(#c3d3e8,#b3c6df);border:1px solid #98aecb;border-bottom:none"></div>
<div class="t" style="left:1143px;top:131px;font-size:10.5px;color:#1e395b">Risultati</div>
<div class="a" style="left:1068px;top:148px;width:299px;height:687px;background:#fff;border:1px solid #98aecb"></div>
<div class="a" style="left:1072px;top:123px;width:62px;height:27px;background:#fff;border:1px solid #98aecb;border-bottom:none"></div>
<div class="t" style="left:1081px;top:131px;font-size:10.5px;color:#1e2b3f">Proprietà</div>
<div class="t" style="left:1090px;top:160px;font-size:11px;color:#1e395b">Filtro entità</div>
<div class="a" style="left:1159px;top:156px;width:176px;height:19px;background:#fff;border:1px solid #a3b3c8"></div>
<div class="t" style="left:1162px;top:161px;font-size:11px;color:#111">Trave (3)</div>
<div class="a" style="left:1317px;top:157px;width:17px;height:17px;background:linear-gradient(#e9eff7,#d5e0ee);border-left:1px solid #a3b3c8"></div>
<div class="a" style="left:1322px;top:164px;width:0;height:0;border-left:4px solid transparent;border-right:4px solid transparent;border-top:4px solid #3d4f66"></div>
<svg class="a" style="left:1339px;top:156px" width="22" height="20" viewBox="0 0 22 20"><circle cx="8.5" cy="7.5" r="6" fill="#dde9f5" stroke="#8aa0b8" stroke-width="2"/><circle cx="7" cy="6" r="2.5" fill="#fff"/><line x1="13" y1="12" x2="19" y2="17.5" stroke="#c07a3a" stroke-width="3.2" stroke-linecap="round"/></svg>
<div class="a" style="left:1070px;top:180px;width:294px;height:1px;background:#cad8eb"></div>
<div class="a" style="left:1070px;top:181px;width:21px;height:589px;background:#e8eff9"></div>
<div class="a" style="left:1070px;top:181px;width:294px;height:18px;background:#e8eff9"></div>
<svg class="a" style="left:1076px;top:187px" width="9" height="6" viewBox="0 0 9 6"><polyline points="1,1 4.5,4.5 8,1" fill="none" stroke="#4a5870" stroke-width="1.8"/></svg>
<div class="t" style="left:1094px;top:184px;font-size:12px;font-weight:bold;color:#1e395b">Caratteristiche</div>
<div class="a" style="left:1070px;top:199px;width:294px;height:1px;background:#cad8eb"></div>
<div class="a" style="left:1070px;top:200px;width:21px;height:18px;background:#e8eff9"></div>
<div class="a" style="left:1091px;top:200px;width:114px;height:18px;background:#fff"></div>
<div class="a" style="left:1205px;top:200px;width:1px;height:18px;background:#cad8eb"></div>
<div class="a" style="left:1206px;top:200px;width:158px;height:18px;background:#fff"></div>
<div class="a" style="left:1091px;top:200px;width:1px;height:18px;background:#cad8eb"></div>
<div class="t" style="left:1112px;top:204px;font-size:10.6px;color:#1e2b3f">Sezione</div>
<div class="t" style="left:1207px;top:204px;font-size:10.6px;color:#1e2b3f">60x24</div>
<div class="a" style="left:1091px;top:218px;width:273px;height:1px;background:#cad8eb"></div>
<div class="a" style="left:1070px;top:219px;width:21px;height:18px;background:#e8eff9"></div>
<div class="a" style="left:1091px;top:219px;width:114px;height:18px;background:#fff"></div>
<div class="a" style="left:1205px;top:219px;width:1px;height:18px;background:#cad8eb"></div>
<div class="a" style="left:1206px;top:219px;width:158px;height:18px;background:#fff"></div>
<div class="a" style="left:1091px;top:219px;width:1px;height:18px;background:#cad8eb"></div>
<div class="t" style="left:1112px;top:223px;font-size:10.6px;color:#1e2b3f">Materiale</div>
<div class="t" style="left:1207px;top:223px;font-size:10.6px;color:#1e2b3f">Cls C25/30_B450C</div>
<div class="a" style="left:1091px;top:237px;width:273px;height:1px;background:#cad8eb"></div>
<div class="a" style="left:1070px;top:238px;width:21px;height:18px;background:#e8eff9"></div>
<div class="a" style="left:1091px;top:238px;width:114px;height:18px;background:#fff"></div>
<div class="a" style="left:1205px;top:238px;width:1px;height:18px;background:#cad8eb"></div>
<div class="a" style="left:1206px;top:238px;width:158px;height:18px;background:#fff"></div>
<div class="a" style="left:1091px;top:238px;width:1px;height:18px;background:#cad8eb"></div>
<div class="t" style="left:1112px;top:242px;font-size:10.6px;color:#1e2b3f">Allineamento</div>
<div class="t" style="left:1207px;top:242px;font-size:10.6px;color:#1e2b3f">…cambia…</div>
<div class="a" style="left:1091px;top:256px;width:273px;height:1px;background:#cad8eb"></div>
<div class="a" style="left:1070px;top:257px;width:21px;height:18px;background:#e8eff9"></div>
<div class="a" style="left:1091px;top:257px;width:114px;height:18px;background:#fff"></div>
<div class="a" style="left:1205px;top:257px;width:1px;height:18px;background:#cad8eb"></div>
<div class="a" style="left:1206px;top:257px;width:158px;height:18px;background:#fff"></div>
<div class="a" style="left:1091px;top:257px;width:1px;height:18px;background:#cad8eb"></div>
<div class="t" style="left:1112px;top:261px;font-size:10.6px;color:#1e2b3f">Tipologia trave</div>
<div class="t" style="left:1207px;top:261px;font-size:10.6px;color:#1e2b3f">Elevazione</div>
<div class="a" style="left:1070px;top:275px;width:294px;height:1px;background:#cad8eb"></div>
<div class="a" style="left:1070px;top:276px;width:21px;height:18px;background:#e8eff9"></div>
<div class="a" style="left:1091px;top:276px;width:273px;height:18px;background:#efeadc"></div>
<svg class="a" style="left:1097px;top:281px" width="6" height="9" viewBox="0 0 6 9"><polyline points="1,1 4.5,4.5 1,8" fill="none" stroke="#4a5870" stroke-width="1.8"/></svg>
<div class="t" style="left:1113px;top:280px;font-size:10.6px;color:#1e2b3f">altre caratteristiche…</div>
<div class="a" style="left:1070px;top:294px;width:294px;height:1px;background:#cad8eb"></div>
<div class="a" style="left:1070px;top:295px;width:294px;height:18px;background:#e8eff9"></div>
<svg class="a" style="left:1076px;top:301px" width="9" height="6" viewBox="0 0 9 6"><polyline points="1,1 4.5,4.5 8,1" fill="none" stroke="#4a5870" stroke-width="1.8"/></svg>
<div class="t" style="left:1094px;top:298px;font-size:12px;font-weight:bold;color:#1e395b">Geometria</div>
<div class="a" style="left:1070px;top:313px;width:294px;height:1px;background:#cad8eb"></div>
<div class="a" style="left:1070px;top:314px;width:21px;height:18px;background:#e8eff9"></div>
<div class="a" style="left:1091px;top:314px;width:114px;height:18px;background:#dce8f8"></div>
<div class="a" style="left:1205px;top:314px;width:1px;height:18px;background:#cad8eb"></div>
<div class="a" style="left:1206px;top:314px;width:158px;height:18px;background:#fff"></div>
<div class="a" style="left:1091px;top:314px;width:1px;height:18px;background:#cad8eb"></div>
<div class="t" style="left:1112px;top:318px;font-size:10.6px;color:#1e2b3f">Rotazione</div>
<div class="a" style="left:1206px;top:314px;width:157px;height:18px;border:1px dotted #333"></div>
<div class="a" style="left:1207px;top:317px;width:24px;height:13px;background:#3399ff"></div>
<div class="t" style="left:1207px;top:318px;font-size:10.6px;color:#fff">0.00</div>
<div class="a" style="left:1091px;top:332px;width:273px;height:1px;background:#cad8eb"></div>
<div class="a" style="left:1070px;top:333px;width:21px;height:18px;background:#e8eff9"></div>
<div class="a" style="left:1091px;top:333px;width:114px;height:18px;background:#fff"></div>
<div class="a" style="left:1205px;top:333px;width:1px;height:18px;background:#cad8eb"></div>
<div class="a" style="left:1206px;top:333px;width:158px;height:18px;background:#fff"></div>
<div class="a" style="left:1091px;top:333px;width:1px;height:18px;background:#cad8eb"></div>
<div class="t" style="left:1112px;top:337px;font-size:10.6px;color:#1e2b3f">Luce Libera</div>
<div class="t" style="left:1207px;top:337px;font-size:10.6px;color:#1e2b3f">4.70</div>
<div class="a" style="left:1070px;top:351px;width:294px;height:1px;background:#cad8eb"></div>
<div class="a" style="left:1070px;top:352px;width:21px;height:18px;background:#e8eff9"></div>
<div class="a" style="left:1091px;top:352px;width:273px;height:18px;background:#efeadc"></div>
<svg class="a" style="left:1096px;top:358px" width="9" height="6" viewBox="0 0 9 6"><polyline points="1,1 4.5,4.5 8,1" fill="none" stroke="#4a5870" stroke-width="1.8"/></svg>
<div class="t" style="left:1114px;top:355px;font-size:12px;font-weight:bold;color:#1e395b">PUNTO iniziale</div>
<div class="a" style="left:1111px;top:370px;width:253px;height:1px;background:#cad8eb"></div>
<div class="a" style="left:1070px;top:371px;width:21px;height:18px;background:#e8eff9"></div>
<div class="a" style="left:1091px;top:370px;width:20px;height:20px;background:#efeadc"></div>
<div class="a" style="left:1111px;top:371px;width:94px;height:18px;background:#fff"></div>
<div class="a" style="left:1205px;top:371px;width:1px;height:18px;background:#cad8eb"></div>
<div class="a" style="left:1206px;top:371px;width:158px;height:18px;background:#fff"></div>
<div class="a" style="left:1111px;top:371px;width:1px;height:18px;background:#cad8eb"></div>
<div class="t" style="left:1132px;top:375px;font-size:10.6px;color:#1e2b3f">Lunghezza</div>
<div class="t" style="left:1207px;top:375px;font-size:10.6px;color:#1e2b3f">5.00</div>
<div class="a" style="left:1111px;top:389px;width:253px;height:1px;background:#cad8eb"></div>
<div class="a" style="left:1070px;top:390px;width:21px;height:18px;background:#e8eff9"></div>
<div class="a" style="left:1091px;top:389px;width:20px;height:20px;background:#efeadc"></div>
<div class="a" style="left:1111px;top:390px;width:94px;height:18px;background:#fff"></div>
<div class="a" style="left:1205px;top:390px;width:1px;height:18px;background:#cad8eb"></div>
<div class="a" style="left:1206px;top:390px;width:158px;height:18px;background:#fff"></div>
<div class="a" style="left:1111px;top:390px;width:1px;height:18px;background:#cad8eb"></div>
<div class="t" style="left:1132px;top:394px;font-size:10.6px;color:#1e2b3f">Angolo XY</div>
<div class="t" style="left:1207px;top:394px;font-size:10.6px;color:#1e2b3f">0.00</div>
<div class="a" style="left:1111px;top:408px;width:253px;height:1px;background:#cad8eb"></div>
<div class="a" style="left:1070px;top:409px;width:21px;height:18px;background:#e8eff9"></div>
<div class="a" style="left:1091px;top:408px;width:20px;height:20px;background:#efeadc"></div>
<div class="a" style="left:1111px;top:409px;width:94px;height:18px;background:#fff"></div>
<div class="a" style="left:1205px;top:409px;width:1px;height:18px;background:#cad8eb"></div>
<div class="a" style="left:1206px;top:409px;width:158px;height:18px;background:#fff"></div>
<div class="a" style="left:1111px;top:409px;width:1px;height:18px;background:#cad8eb"></div>
<div class="t" style="left:1132px;top:413px;font-size:10.6px;color:#1e2b3f">XY</div>
<div class="t" style="left:1207px;top:413px;font-size:10.6px;color:#1e2b3f">[-0.16; 14.52]</div>
<div class="a" style="left:1111px;top:427px;width:253px;height:1px;background:#cad8eb"></div>
<div class="a" style="left:1070px;top:428px;width:21px;height:18px;background:#e8eff9"></div>
<div class="a" style="left:1091px;top:427px;width:20px;height:20px;background:#efeadc"></div>
<div class="a" style="left:1111px;top:428px;width:94px;height:18px;background:#fff"></div>
<div class="a" style="left:1205px;top:428px;width:1px;height:18px;background:#cad8eb"></div>
<div class="a" style="left:1206px;top:428px;width:158px;height:18px;background:#fff"></div>
<div class="a" style="left:1111px;top:428px;width:1px;height:18px;background:#cad8eb"></div>
<div class="t" style="left:1132px;top:432px;font-size:10.6px;color:#1e2b3f">Quota</div>
<div class="t" style="left:1207px;top:432px;font-size:10.6px;color:#1e2b3f">2.50</div>
<div class="a" style="left:1070px;top:446px;width:294px;height:1px;background:#cad8eb"></div>
<div class="a" style="left:1070px;top:447px;width:21px;height:18px;background:#e8eff9"></div>
<div class="a" style="left:1091px;top:447px;width:273px;height:18px;background:#efeadc"></div>
<svg class="a" style="left:1096px;top:453px" width="9" height="6" viewBox="0 0 9 6"><polyline points="1,1 4.5,4.5 8,1" fill="none" stroke="#4a5870" stroke-width="1.8"/></svg>
<div class="t" style="left:1114px;top:450px;font-size:12px;font-weight:bold;color:#1e395b">PUNTO finale</div>
<div class="a" style="left:1111px;top:465px;width:253px;height:1px;background:#cad8eb"></div>
<div class="a" style="left:1070px;top:466px;width:21px;height:18px;background:#e8eff9"></div>
<div class="a" style="left:1091px;top:465px;width:20px;height:20px;background:#efeadc"></div>
<div class="a" style="left:1111px;top:466px;width:94px;height:18px;background:#fff"></div>
<div class="a" style="left:1205px;top:466px;width:1px;height:18px;background:#cad8eb"></div>
<div class="a" style="left:1206px;top:466px;width:158px;height:18px;background:#fff"></div>
<div class="a" style="left:1111px;top:466px;width:1px;height:18px;background:#cad8eb"></div>
<div class="t" style="left:1132px;top:470px;font-size:10.6px;color:#1e2b3f">Lunghezza</div>
<div class="t" style="left:1207px;top:470px;font-size:10.6px;color:#1e2b3f">5.00</div>
<div class="a" style="left:1111px;top:484px;width:253px;height:1px;background:#cad8eb"></div>
<div class="a" style="left:1070px;top:485px;width:21px;height:18px;background:#e8eff9"></div>
<div class="a" style="left:1091px;top:484px;width:20px;height:20px;background:#efeadc"></div>
<div class="a" style="left:1111px;top:485px;width:94px;height:18px;background:#fff"></div>
<div class="a" style="left:1205px;top:485px;width:1px;height:18px;background:#cad8eb"></div>
<div class="a" style="left:1206px;top:485px;width:158px;height:18px;background:#fff"></div>
<div class="a" style="left:1111px;top:485px;width:1px;height:18px;background:#cad8eb"></div>
<div class="t" style="left:1132px;top:489px;font-size:10.6px;color:#1e2b3f">Angolo XY</div>
<div class="t" style="left:1207px;top:489px;font-size:10.6px;color:#1e2b3f">180.00</div>
<div class="a" style="left:1111px;top:503px;width:253px;height:1px;background:#cad8eb"></div>
<div class="a" style="left:1070px;top:504px;width:21px;height:18px;background:#e8eff9"></div>
<div class="a" style="left:1091px;top:503px;width:20px;height:20px;background:#efeadc"></div>
<div class="a" style="left:1111px;top:504px;width:94px;height:18px;background:#fff"></div>
<div class="a" style="left:1205px;top:504px;width:1px;height:18px;background:#cad8eb"></div>
<div class="a" style="left:1206px;top:504px;width:158px;height:18px;background:#fff"></div>
<div class="a" style="left:1111px;top:504px;width:1px;height:18px;background:#cad8eb"></div>
<div class="t" style="left:1132px;top:508px;font-size:10.6px;color:#1e2b3f">XY</div>
<div class="t" style="left:1207px;top:508px;font-size:10.6px;color:#1e2b3f">[4.84; 14.52]</div>
<div class="a" style="left:1111px;top:522px;width:253px;height:1px;background:#cad8eb"></div>
<div class="a" style="left:1070px;top:523px;width:21px;height:18px;background:#e8eff9"></div>
<div class="a" style="left:1091px;top:522px;width:20px;height:20px;background:#efeadc"></div>
<div class="a" style="left:1111px;top:523px;width:94px;height:18px;background:#fff"></div>
<div class="a" style="left:1205px;top:523px;width:1px;height:18px;background:#cad8eb"></div>
<div class="a" style="left:1206px;top:523px;width:158px;height:18px;background:#fff"></div>
<div class="a" style="left:1111px;top:523px;width:1px;height:18px;background:#cad8eb"></div>
<div class="t" style="left:1132px;top:527px;font-size:10.6px;color:#1e2b3f">Quota</div>
<div class="t" style="left:1207px;top:527px;font-size:10.6px;color:#1e2b3f">2.50</div>
<div class="a" style="left:1070px;top:541px;width:294px;height:1px;background:#cad8eb"></div>
<div class="a" style="left:1070px;top:542px;width:294px;height:18px;background:#e8eff9"></div>
<svg class="a" style="left:1077px;top:547px" width="6" height="9" viewBox="0 0 6 9"><polyline points="1,1 4.5,4.5 1,8" fill="none" stroke="#4a5870" stroke-width="1.8"/></svg>
<div class="t" style="left:1094px;top:545px;font-size:12px;font-weight:bold;color:#1e395b">Ancora al Piano</div>
<div class="a" style="left:1070px;top:560px;width:294px;height:1px;background:#cad8eb"></div>
<div class="a" style="left:1070px;top:561px;width:294px;height:18px;background:#e8eff9"></div>
<svg class="a" style="left:1077px;top:566px" width="6" height="9" viewBox="0 0 6 9"><polyline points="1,1 4.5,4.5 1,8" fill="none" stroke="#4a5870" stroke-width="1.8"/></svg>
<div class="t" style="left:1094px;top:564px;font-size:12px;font-weight:bold;color:#1e395b">Vincoli Interni</div>
<div class="a" style="left:1070px;top:579px;width:294px;height:1px;background:#cad8eb"></div>
<div class="a" style="left:1070px;top:580px;width:294px;height:18px;background:#e8eff9"></div>
<svg class="a" style="left:1076px;top:586px" width="9" height="6" viewBox="0 0 9 6"><polyline points="1,1 4.5,4.5 8,1" fill="none" stroke="#4a5870" stroke-width="1.8"/></svg>
<div class="t" style="left:1094px;top:583px;font-size:12px;font-weight:bold;color:#1e395b">Carichi e Forze</div>
<div class="a" style="left:1070px;top:598px;width:294px;height:1px;background:#cad8eb"></div>
<div class="a" style="left:1070px;top:599px;width:21px;height:18px;background:#e8eff9"></div>
<div class="a" style="left:1091px;top:599px;width:114px;height:18px;background:#fff"></div>
<div class="a" style="left:1205px;top:599px;width:1px;height:18px;background:#cad8eb"></div>
<div class="a" style="left:1206px;top:599px;width:158px;height:18px;background:#fff"></div>
<div class="a" style="left:1091px;top:599px;width:1px;height:18px;background:#cad8eb"></div>
<div class="t" style="left:1112px;top:603px;font-size:10.6px;color:#1e2b3f">Forze Lineari</div>
<div class="t" style="left:1207px;top:603px;font-size:10.6px;color:#1e2b3f">n. 11</div>
<div class="a" style="left:1091px;top:617px;width:273px;height:1px;background:#cad8eb"></div>
<div class="a" style="left:1070px;top:618px;width:21px;height:18px;background:#e8eff9"></div>
<div class="a" style="left:1091px;top:618px;width:114px;height:18px;background:#fff"></div>
<div class="a" style="left:1205px;top:618px;width:1px;height:18px;background:#cad8eb"></div>
<div class="a" style="left:1206px;top:618px;width:158px;height:18px;background:#fff"></div>
<div class="a" style="left:1091px;top:618px;width:1px;height:18px;background:#cad8eb"></div>
<div class="t" style="left:1112px;top:622px;font-size:10.6px;color:#1e2b3f">Forze Concentrate</div>
<div class="t" style="left:1207px;top:622px;font-size:10.6px;color:#1e2b3f">n.0</div>
<div class="a" style="left:1091px;top:636px;width:273px;height:1px;background:#cad8eb"></div>
<div class="a" style="left:1070px;top:637px;width:21px;height:18px;background:#e8eff9"></div>
<div class="a" style="left:1091px;top:637px;width:114px;height:18px;background:#fff"></div>
<div class="a" style="left:1205px;top:637px;width:1px;height:18px;background:#cad8eb"></div>
<div class="a" style="left:1206px;top:637px;width:158px;height:18px;background:#fff"></div>
<div class="a" style="left:1091px;top:637px;width:1px;height:18px;background:#cad8eb"></div>
<div class="t" style="left:1112px;top:641px;font-size:10.6px;color:#1e2b3f">Carico Termico</div>
<div class="t" style="left:1207px;top:641px;font-size:10.6px;color:#1e2b3f">NO</div>
<div class="a" style="left:1070px;top:655px;width:294px;height:1px;background:#cad8eb"></div>
<div class="a" style="left:1070px;top:656px;width:294px;height:18px;background:#e8eff9"></div>
<svg class="a" style="left:1076px;top:662px" width="9" height="6" viewBox="0 0 9 6"><polyline points="1,1 4.5,4.5 8,1" fill="none" stroke="#4a5870" stroke-width="1.8"/></svg>
<div class="t" style="left:1094px;top:659px;font-size:12px;font-weight:bold;color:#1e395b">Funzionalità</div>
<div class="a" style="left:1070px;top:674px;width:294px;height:1px;background:#cad8eb"></div>
<div class="a" style="left:1070px;top:675px;width:21px;height:18px;background:#e8eff9"></div>
<div class="a" style="left:1091px;top:675px;width:114px;height:18px;background:#fff"></div>
<div class="a" style="left:1205px;top:675px;width:1px;height:18px;background:#cad8eb"></div>
<div class="a" style="left:1206px;top:675px;width:158px;height:18px;background:#fff"></div>
<div class="a" style="left:1091px;top:675px;width:1px;height:18px;background:#cad8eb"></div>
<div class="t" style="left:1112px;top:679px;font-size:10.6px;color:#1e2b3f">Allinea Edificius</div>
<div class="t" style="left:1207px;top:679px;font-size:10.6px;color:#1e2b3f">Punto superiore</div>
<div class="a" style="left:1091px;top:693px;width:273px;height:1px;background:#cad8eb"></div>
<div class="a" style="left:1070px;top:694px;width:21px;height:19px;background:#e8eff9"></div>
<div class="a" style="left:1091px;top:694px;width:114px;height:19px;background:#fff"></div>
<div class="a" style="left:1205px;top:694px;width:1px;height:19px;background:#cad8eb"></div>
<div class="a" style="left:1206px;top:694px;width:158px;height:19px;background:#fff"></div>
<div class="a" style="left:1091px;top:694px;width:1px;height:19px;background:#cad8eb"></div>
<div class="t" style="left:1112px;top:698px;font-size:10.6px;color:#1e2b3f">Mostra su Piano su</div>
<div class="a" style="left:1279px;top:698px;width:12px;height:12px;border:1px solid #a8a8a8;background:linear-gradient(#f0f0f0,#fff)"></div>
<div class="a" style="left:1091px;top:713px;width:273px;height:1px;background:#cad8eb"></div>
<div class="a" style="left:1070px;top:714px;width:21px;height:18px;background:#e8eff9"></div>
<div class="a" style="left:1091px;top:714px;width:114px;height:18px;background:#fff"></div>
<div class="a" style="left:1205px;top:714px;width:1px;height:18px;background:#cad8eb"></div>
<div class="a" style="left:1206px;top:714px;width:158px;height:18px;background:#fff"></div>
<div class="a" style="left:1091px;top:714px;width:1px;height:18px;background:#cad8eb"></div>
<div class="t" style="left:1112px;top:718px;font-size:10.6px;color:#1e2b3f">Sposta</div>
<div class="t" style="left:1207px;top:718px;font-size:10.6px;color:#1e2b3f">Z</div>
<div class="a" style="left:1091px;top:732px;width:273px;height:1px;background:#cad8eb"></div>
<div class="a" style="left:1070px;top:733px;width:21px;height:18px;background:#e8eff9"></div>
<div class="a" style="left:1091px;top:733px;width:114px;height:18px;background:#fff"></div>
<div class="a" style="left:1205px;top:733px;width:1px;height:18px;background:#cad8eb"></div>
<div class="a" style="left:1206px;top:733px;width:158px;height:18px;background:#fff"></div>
<div class="a" style="left:1091px;top:733px;width:1px;height:18px;background:#cad8eb"></div>
<div class="t" style="left:1112px;top:737px;font-size:10.6px;color:#1e2b3f">Angolo XY-Z&nbsp; [°ssd</div>
<div class="t" style="left:1207px;top:737px;font-size:10.6px;color:#1e2b3f"> -</div>
<div class="a" style="left:1070px;top:751px;width:294px;height:1px;background:#cad8eb"></div>
<div class="a" style="left:1070px;top:752px;width:294px;height:18px;background:#e8eff9"></div>
<svg class="a" style="left:1077px;top:757px" width="6" height="9" viewBox="0 0 6 9"><polyline points="1,1 4.5,4.5 1,8" fill="none" stroke="#4a5870" stroke-width="1.8"/></svg>
<div class="t" style="left:1094px;top:755px;font-size:12px;font-weight:bold;color:#1e395b">Aspetto</div>
<div class="a" style="left:1070px;top:770px;width:294px;height:1px;background:#cad8eb"></div>
<div class="a" style="left:1104px;top:312px;width:145px;height:22px;border:3px solid #d8202c"></div>
<svg class="a" style="left:1072px;top:267px" width="18" height="34" viewBox="0 0 18 34"><polygon points="4,0 14,0 14,16 18,16 9,33 0,16 4,16" fill="#ec1c24"/></svg>
<svg class="a" style="left:1144px;top:267px" width="18" height="34" viewBox="0 0 18 34"><polygon points="4,0 14,0 14,16 18,16 9,33 0,16 4,16" fill="#ec1c24"/></svg>
<svg class="a" style="left:0;top:0" width="1411" height="875" viewBox="0 0 1411 875"><path d="M444,461.5 C619,364.6 768,311 1000,321.4 L1087,323.7" fill="none" stroke="#000" stroke-width="4.5" stroke-linecap="round"/><polyline points="1066,308 1087,324 1066,340" fill="none" stroke="#000" stroke-width="4.5" stroke-linecap="round" stroke-linejoin="round"/></svg>
</body></html>
